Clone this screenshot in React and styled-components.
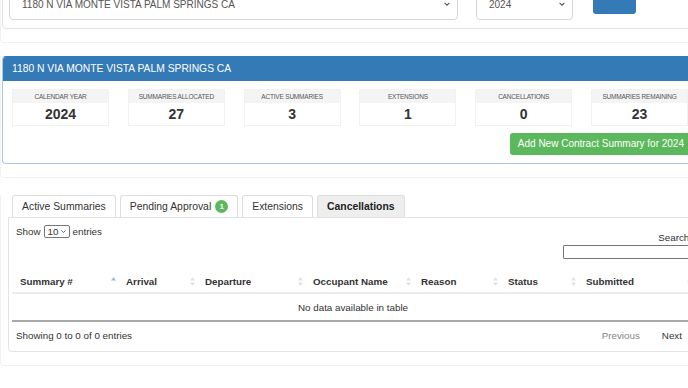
import React from "react";
import styled, { createGlobalStyle } from "styled-components";

const GlobalStyle = createGlobalStyle`
  html, body {
    margin: 0;
    padding: 0;
    background: #fff;
    overflow: hidden;
  }
  body {
    font-family: "Liberation Sans", Arial, sans-serif;
    color: #333;
  }
`;

const Page = styled.div`
  width: 700px;
  margin-top: -21px;
`;

const Section = styled.div`
  border: 1px solid #f2f2f2;
  border-top: none;
  border-radius: 0 0 4px 4px;
  padding: 0 0 13px 1px;
  margin-bottom: ${(p) => p.$gap || 12}px;
`;

const FilterPanel = styled.div`
  border: 1px solid #e2e2e2;
  border-radius: 4px;
  padding: 8px 6px 8px 6px;
  display: flex;
  align-items: flex-start;
  gap: 18px;
`;

const SelectBox = styled.div`
  width: ${(p) => p.$w}px;
  height: 32px;
  box-sizing: border-box;
  border: 1px solid #d6d6d6;
  border-radius: 4px;
  display: flex;
  align-items: center;
  justify-content: space-between;
  padding: 0 6px 0 12px;
  font-size: 10px;
  color: #555;
  box-shadow: inset 0 1px 1px rgba(0, 0, 0, 0.04);
`;

const BlueButton = styled.div`
  width: 43px;
  height: 26px;
  margin-left: 2px;
  background: #337ab7;
  border-radius: 3px;
`;

const Panel = styled.div`
  border: 1px solid #a8c8e6;
  border-top-color: #337ab7;
  border-radius: 4px;
  overflow: hidden;
`;

const PanelHeading = styled.div`
  background: #337ab7;
  color: #fff;
  font-size: 10.3px;
  height: 24px;
  line-height: 24px;
  padding: 0 9px;
`;

const PanelBody = styled.div`
  padding: 8px 10px 8px 9px;
  display: flex;
  flex-direction: column;
  align-items: flex-end;
`;

const StatGrid = styled.div`
  align-self: stretch;
  display: grid;
  grid-template-columns: repeat(6, 97px);
  column-gap: 18.8px;
`;

const Stat = styled.div`
  border: 1px solid #f1f1f1;
  text-align: center;
`;

const StatLabel = styled.div`
  background: #f4f4f4;
  height: 13px;
  line-height: 13px;
  font-size: 6.5px;
  color: #555;
  text-transform: uppercase;
  letter-spacing: -0.2px;
`;

const StatValue = styled.div`
  height: 22px;
  line-height: 22px;
  font-size: 14px;
  font-weight: bold;
  color: #333;
`;

const GreenButton = styled.div`
  margin-top: 7px;
  margin-right: -4px;
  background: #5cb85c;
  color: #fff;
  font-size: 10px;
  height: 22px;
  line-height: 22px;
  padding: 0 8px;
  border-radius: 3px;
  white-space: nowrap;
`;

const Tabs = styled.div`
  display: flex;
  gap: 4px;
  padding-left: 10px;
`;

const Tab = styled.div`
  height: 22px;
  box-sizing: border-box;
  padding: 0 9px;
  font-size: 10.4px;
  font-weight: ${(p) => (p.$active ? "bold" : "normal")};
  background: ${(p) => (p.$active ? "#eeeeee" : "#fff")};
  color: ${(p) => (p.$active ? "#222" : "#333")};
  border: 1px solid #ddd;
  border-bottom: none;
  border-radius: 3px 3px 0 0;
  display: flex;
  align-items: center;
  gap: 4px;
`;

const Badge = styled.span`
  display: inline-block;
  width: 13px;
  height: 13px;
  line-height: 13px;
  border-radius: 50%;
  background: #5cb85c;
  color: #fff;
  font-size: 8px;
  font-weight: bold;
  text-align: center;
`;

const TabContent = styled.div`
  margin-left: 6px;
  border: 1px solid #e3e3e3;
  border-radius: 0 0 4px 4px;
  padding: 6px 6px 0 3px;
  height: 135px;
  box-sizing: border-box;
  font-size: 9.8px;
`;

const Controls = styled.div`
  display: flex;
  justify-content: space-between;
  padding-left: 4px;
`;

const Length = styled.div`
  display: flex;
  align-items: center;
  gap: 3px;
  height: 14px;
`;

const MiniSelect = styled.div`
  width: 26px;
  height: 13px;
  box-sizing: border-box;
  border: 1px solid #767676;
  border-radius: 2px;
  display: flex;
  align-items: center;
  justify-content: space-between;
  padding: 0 2px 0 3px;
  font-size: 9.8px;
`;

const Filter = styled.div`
  display: flex;
  flex-direction: column;
  align-items: flex-end;
  padding-top: 8px;
  gap: 2px;
`;

const SearchInput = styled.div`
  width: 129px;
  height: 14px;
  box-sizing: border-box;
  border: 1px solid #767676;
  border-radius: 1px;
`;

const Table = styled.table`
  border-collapse: collapse;
  table-layout: fixed;
  width: 682px;
  margin-top: 11px;
  border-bottom: 2px solid #aaa;
`;

const Th = styled.th`
  text-align: left;
  font-size: 9.8px;
  font-weight: bold;
  height: 22px;
  padding: 0 0 0 8px;
  border-bottom: 2px solid #e9eef3;
  position: relative;
`;

const SortIcon = styled.svg`
  position: absolute;
  right: 2px;
  top: 7px;
`;

const Td = styled.td`
  text-align: center;
  height: 24px;
  font-size: 9.8px;
`;

const Footer = styled.div`
  display: flex;
  justify-content: space-between;
  align-items: center;
  padding: 0 0 0 4px;
  height: 26px;
`;

const Pager = styled.div`
  display: flex;
  gap: 22px;
  padding-right: 10px;
`;

const PageLink = styled.span`
  color: ${(p) => (p.$disabled ? "#888" : "#333")};
`;

const Chevron = ({ size = 8 }) => (
  <svg width={size} height={size} viewBox="0 0 10 10">
    <path d="M2 3.5 L5 6.5 L8 3.5" fill="none" stroke="#555" strokeWidth="1.3" />
  </svg>
);

const Sort = ({ asc }) => (
  <SortIcon width="5" height="9" viewBox="0 0 5 9">
    <path d="M0 3.5 L2.5 0 L5 3.5 Z" fill={asc ? "#9fb9d6" : "#e2e2e2"} />
    {!asc && <path d="M0 5.5 L2.5 9 L5 5.5 Z" fill="#e2e2e2" />}
  </SortIcon>
);

const stats = [
  { label: "Calendar Year", value: "2024" },
  { label: "Summaries Allocated", value: "27" },
  { label: "Active Summaries", value: "3" },
  { label: "Extensions", value: "1" },
  { label: "Cancellations", value: "0" },
  { label: "Summaries Remaining", value: "23" },
];

const columns = [
  { name: "Summary #", w: 106, asc: true },
  { name: "Arrival", w: 79 },
  { name: "Departure", w: 108 },
  { name: "Occupant Name", w: 108 },
  { name: "Reason", w: 87 },
  { name: "Status", w: 78 },
  { name: "Submitted", w: 116 },
];

const App = () => {
  return (
    <>
      <GlobalStyle />
      <Page>
        <Section $gap={13}>
          <FilterPanel>
            <SelectBox $w={449}>
              1180 N VIA MONTE VISTA PALM SPRINGS CA
              <Chevron />
            </SelectBox>
            <SelectBox $w={97}>
              2024
              <Chevron />
            </SelectBox>
            <BlueButton />
          </FilterPanel>
        </Section>

        <Section $gap={17}>
          <Panel>
            <PanelHeading>1180 N VIA MONTE VISTA PALM SPRINGS CA</PanelHeading>
            <PanelBody>
              <StatGrid>
                {stats.map((s) => (
                  <Stat key={s.label}>
                    <StatLabel>{s.label}</StatLabel>
                    <StatValue>{s.value}</StatValue>
                  </Stat>
                ))}
              </StatGrid>
              <GreenButton>Add New Contract Summary for 2024</GreenButton>
            </PanelBody>
          </Panel>
        </Section>

        <Section>
          <Tabs>
            <Tab>Active Summaries</Tab>
            <Tab>
              Pending Approval <Badge>1</Badge>
            </Tab>
            <Tab>Extensions</Tab>
            <Tab $active>Cancellations</Tab>
          </Tabs>
          <TabContent>
            <Controls>
              <Length>
                Show
                <MiniSelect>
                  10
                  <Chevron size={7} />
                </MiniSelect>
                entries
              </Length>
              <Filter>
                <span>Search:</span>
                <SearchInput />
              </Filter>
            </Controls>
            <Table>
              <colgroup>
                {columns.map((c) => (
                  <col key={c.name} style={{ width: c.w }} />
                ))}
              </colgroup>
              <thead>
                <tr>
                  {columns.map((c) => (
                    <Th key={c.name}>
                      {c.name}
                      <Sort asc={c.asc} />
                    </Th>
                  ))}
                </tr>
              </thead>
              <tbody>
                <tr>
                  <Td colSpan={7}>No data available in table</Td>
                </tr>
              </tbody>
            </Table>
            <Footer>
              <span>Showing 0 to 0 of 0 entries</span>
              <Pager>
                <PageLink $disabled>Previous</PageLink>
                <PageLink>Next</PageLink>
              </Pager>
            </Footer>
          </TabContent>
        </Section>
      </Page>
    </>
  );
};

export default App;
